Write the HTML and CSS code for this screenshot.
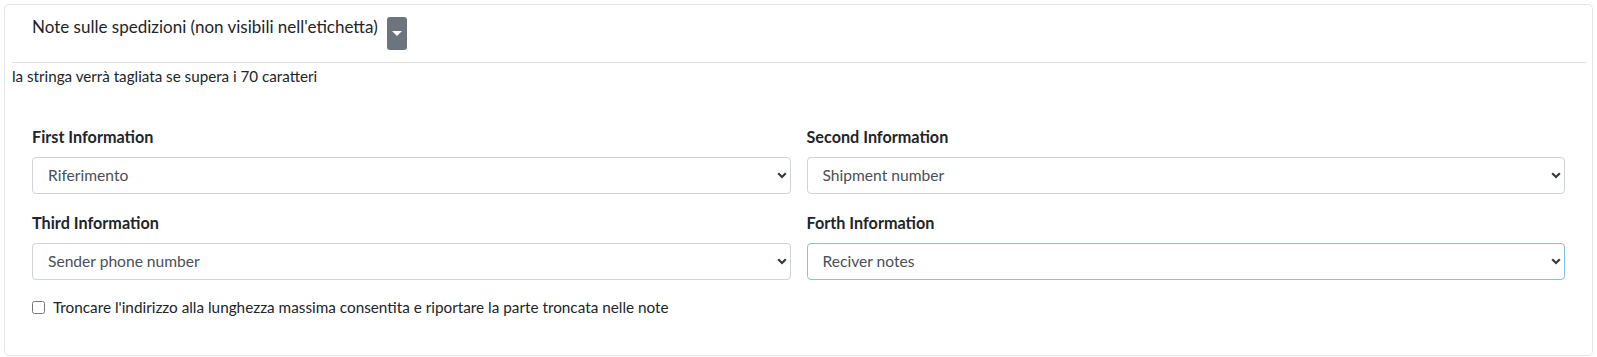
FILE: index.html
```html
<!DOCTYPE html>
<html lang="it">
<head>
    <meta charset="UTF-8">
    <meta name="viewport" content="width=device-width, initial-scale=1.0">
    <title>Note sulle spedizioni</title>
    <link rel="stylesheet" href="styles.css">
</head>
<body>
    <div class="wrap">
        <div class="card">
            <div class="card-head">
                <span class="card-title">Note sulle spedizioni (non visibili nell'etichetta)</span>
                <button class="toggle-btn" type="button"><span class="caret"></span></button>
            </div>
            <hr class="divider">
            <div class="hint">la stringa verrà tagliata se supera i 70 caratteri</div>

            <div class="form-grid">
                <div class="field">
                    <label class="field-label">First Information</label>
                    <div class="select-wrap">
                        <select class="field-select">
                            <option>Riferimento</option>
                        </select>
                        <svg class="chevron" width="10" height="7" viewBox="0 0 10 7"><path d="M1.2 1.2 L5 5 L8.8 1.2" fill="none" stroke="#343a40" stroke-width="2.2"/></svg>
                    </div>
                </div>
                <div class="field">
                    <label class="field-label">Second Information</label>
                    <div class="select-wrap">
                        <select class="field-select">
                            <option>Shipment number</option>
                        </select>
                        <svg class="chevron" width="10" height="7" viewBox="0 0 10 7"><path d="M1.2 1.2 L5 5 L8.8 1.2" fill="none" stroke="#343a40" stroke-width="2.2"/></svg>
                    </div>
                </div>
                <div class="field">
                    <label class="field-label">Third Information</label>
                    <div class="select-wrap">
                        <select class="field-select">
                            <option>Sender phone number</option>
                        </select>
                        <svg class="chevron" width="10" height="7" viewBox="0 0 10 7"><path d="M1.2 1.2 L5 5 L8.8 1.2" fill="none" stroke="#343a40" stroke-width="2.2"/></svg>
                    </div>
                </div>
                <div class="field">
                    <label class="field-label">Forth Information</label>
                    <div class="select-wrap">
                        <select class="field-select focused">
                            <option>Reciver notes</option>
                        </select>
                        <svg class="chevron" width="10" height="7" viewBox="0 0 10 7"><path d="M1.2 1.2 L5 5 L8.8 1.2" fill="none" stroke="#343a40" stroke-width="2.2"/></svg>
                    </div>
                </div>
            </div>

            <label class="check-row">
                <input type="checkbox" class="check">
                <span>Troncare l'indirizzo alla lunghezza massima consentita e riportare la parte troncata nelle note</span>
            </label>
        </div>
    </div>
</body>
</html>
```

FILE: styles.css
```css
body {
    margin: 0;
    font-family: "Lato", "Open Sans", sans-serif;
    color: #212529;
    background: #fff;
}
.wrap {
    padding: 4px;
}
.card {
    height: 350px;
    border: 1px solid #e3e6e9;
    border-radius: 5px;
    padding: 0 6px 0 7px;
}
.card-head {
    display: flex;
    align-items: flex-start;
    gap: 9px;
    padding: 9px 0 12px 20px;
}
.card-title {
    font-size: 17px;
    line-height: 26px;
}
.toggle-btn {
    margin-top: 3px;
    width: 20px;
    height: 33px;
    padding: 0;
    border: none;
    border-radius: 3px;
    background: #6c757d;
    display: flex;
    align-items: center;
    justify-content: center;
}
.caret {
    width: 0;
    height: 0;
    border-left: 5px solid transparent;
    border-right: 5px solid transparent;
    border-top: 5px solid #fff;
}
.divider {
    margin: 0;
    border: none;
    border-top: 1px solid #dee2e6;
}
.hint {
    margin-top: 3px;
    font-size: 15.2px;
    line-height: 20px;
}
.form-grid {
    display: grid;
    grid-template-columns: 1fr 1fr;
    column-gap: 16px;
    row-gap: 18px;
    margin-top: 40px;
    padding: 0 21px 0 20px;
}
.field-label {
    display: block;
    font-size: 16.2px;
    font-weight: 700;
    line-height: 21px;
    margin-bottom: 10px;
}
.select-wrap {
    position: relative;
}
.field-select {
    display: block;
    width: 100%;
    height: 37px;
    padding: 0 30px 1px 15px;
    border: 1px solid #ced4da;
    border-radius: 4px;
    background: #fff;
    color: #495057;
    font-family: inherit;
    font-size: 15.6px;
    appearance: none;
    -webkit-appearance: none;
    outline: none;
}
.field-select.focused {
    border-color: #86bdf5;
}
.chevron {
    position: absolute;
    right: 4px;
    top: 15px;
    pointer-events: none;
}
.check-row {
    display: flex;
    align-items: center;
    gap: 8px;
    margin-top: 17px;
    padding-left: 20px;
    font-size: 15.3px;
    line-height: 20px;
}
.check {
    width: 13px;
    height: 13px;
    margin: 0;
}
```
